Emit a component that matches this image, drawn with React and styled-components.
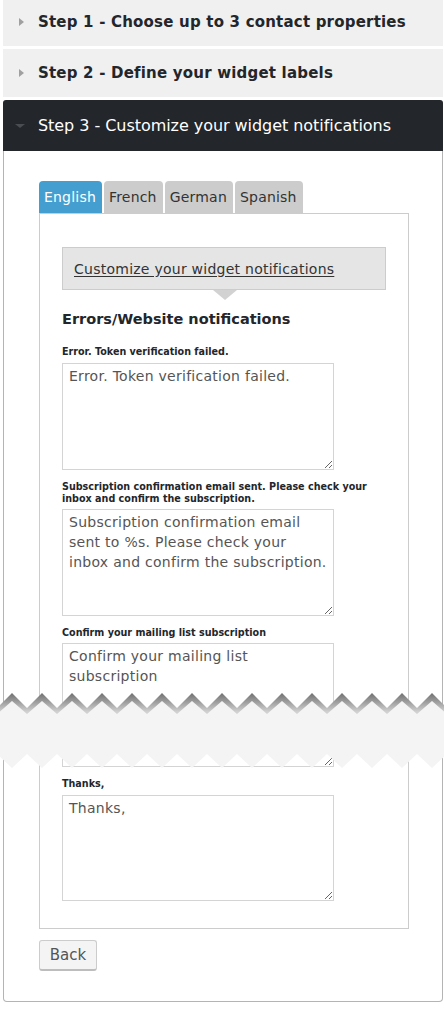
import React from "react";
import styled, { createGlobalStyle } from "styled-components";

const Global = createGlobalStyle`
  html, body { margin: 0; padding: 0; background: #fff; }
  body { font-family: "DejaVu Sans", Verdana, sans-serif; color: #333; }
  * { box-sizing: border-box; }
`;

const Page = styled.div`
  position: relative;
  width: 444px;
  padding: 0 1px 8px 3px;
  overflow: hidden;
`;

const StepHeader = styled.div`
  display: flex;
  align-items: center;
  height: ${(p) => (p.$active ? 51 : 48)}px;
  margin-top: ${(p) => (p.$first ? -2 : 3)}px;
  padding-left: 15px;
  background: ${(p) => (p.$active ? "#23262b" : "#f0f0f0")};
  color: ${(p) => (p.$active ? "#ffffff" : "#23262b")};
  font-size: ${(p) => (p.$active ? 16 : 15)}px;
  letter-spacing: ${(p) => (p.$active ? "-0.05px" : "0.2px")};
  font-weight: ${(p) => (p.$active ? "normal" : "bold")};
  border-radius: ${(p) => (p.$active ? "3px 3px 0 0" : "0")};
`;

const Caret = styled.span`
  display: inline-block;
  width: 0;
  height: 0;
  margin-right: ${(p) => (p.$open ? 13 : 14)}px;
  ${(p) =>
    p.$open
      ? `border-left: 5px solid transparent; border-right: 5px solid transparent; border-top: 4px solid #4a4d52; margin-left: -3px; margin-top: 1px;`
      : `border-top: 4.5px solid transparent; border-bottom: 4.5px solid transparent; border-left: 5px solid #a0a0a0; margin-left: 1px;`}
`;

const Panel = styled.div`
  border: 1px solid #b4b4b4;
  border-top: none;
  border-radius: 0 0 4px 4px;
  padding: 30px 33px 30px 35px;
`;

const TabBar = styled.div`
  display: flex;
  gap: 2px;
`;

const Tab = styled.div`
  height: 32px;
  padding: 0 6px 0 5px;
  display: flex;
  align-items: center;
  font-size: 14px;
  letter-spacing: 0.2px;
  border-radius: 4px 4px 0 0;
  background: ${(p) => (p.$active ? "#449fd0" : "#cccccc")};
  color: ${(p) => (p.$active ? "#ffffff" : "#333333")};
`;

const TabBody = styled.div`
  border: 1px solid #cccccc;
  padding: 33px 22px 27px 22px;
`;

const InfoBox = styled.div`
  position: relative;
  background: #e5e5e5;
  border: 1px solid #cccccc;
  height: 43px;
  padding: 0 11px;
  display: flex;
  align-items: center;
  font-size: 14px;
  letter-spacing: 0.25px;
  color: #333;
  &::after {
    content: "";
    position: absolute;
    left: 150px;
    bottom: -11px;
    border-left: 12px solid transparent;
    border-right: 12px solid transparent;
    border-top: 10px solid #d2d2d2;
  }
`;

const InfoLink = styled.span`
  text-decoration: underline;
  text-underline-offset: 2px;
`;

const SectionTitle = styled.h3`
  margin: 20px 0 0 0;
  font-size: 14.5px;
  font-weight: bold;
  color: #23262b;
  line-height: 18px;
`;

const Field = styled.div`
  display: flex;
  flex-direction: column;
  margin-top: ${(p) => p.$mt || 11}px;
`;

const Label = styled.label`
  font-size: 9.6px;
  font-weight: bold;
  line-height: 12px;
  color: #23262b;
  margin-bottom: ${(p) => p.$mb || 5}px;
`;

const Area = styled.textarea`
  width: 272px;
  height: ${(p) => p.$h || 107}px;
  border: 1px solid #d4d4d4;
  padding: 2px 6px;
  font-family: "DejaVu Sans", Verdana, sans-serif;
  font-size: 14px;
  letter-spacing: 0.27px;
  line-height: 20px;
  color: #555;
  background: #fff;
  margin: 0;
  outline: none;
`;

const BackButton = styled.button`
  margin-top: 11px;
  width: 58px;
  height: 31px;
  border: 1px solid #cccccc;
  border-bottom: 2px solid #bdbdbd;
  border-radius: 3px;
  background: #f4f4f4;
  font-family: "DejaVu Sans", Verdana, sans-serif;
  font-size: 15px;
  color: #555;
  padding: 0;
`;

const Tear = styled.svg`
  position: absolute;
  left: 0;
  top: 690px;
  display: block;
`;

function TearStrip() {
  const top = [];
  const lightTop = [];
  const bottom = [];
  for (let k = -1; k <= 15; k++) {
    top.push(`${12 + 30 * k},3`, `${27 + 30 * k},18`);
    lightTop.push(`${12 + 30 * k},11`, `${27 + 30 * k},24`);
  }
  for (let k = 15; k >= -1; k--) {
    bottom.push(`${27 + 30 * k},64`, `${12 + 30 * k},78`);
  }
  const gray = [...top, "470,40", "-30,40"].join(" ");
  const light = [...lightTop, ...bottom].join(" ");
  return (
    <Tear width="444" height="80" viewBox="0 0 444 80">
      <defs>
        <linearGradient id="tg" x1="0" y1="0" x2="0" y2="1" gradientUnits="objectBoundingBox">
          <stop offset="0" stopColor="#707070" />
          <stop offset="0.5" stopColor="#cfcfcf" />
          <stop offset="1" stopColor="#f0f0f0" />
        </linearGradient>
      </defs>
      <polygon points={gray} fill="url(#tg)" />
      <polygon points={light} fill="#f4f4f4" />
    </Tear>
  );
}

const fields = [
  { label: "Error. Token verification failed.", value: "Error. Token verification failed.", h: 107, mb: 5 },
  {
    label: "Subscription confirmation email sent. Please check your inbox and confirm the subscription.",
    value: "Subscription confirmation email sent to %s. Please check your inbox and confirm the subscription.",
    h: 107,
    mb: 4,
  },
  { label: "Confirm your mailing list subscription", value: "Confirm your mailing list subscription", h: 124, mb: 4 },
  { label: "Thanks,", value: "Thanks,", h: 106, mb: 5 },
];

export default function App() {
  return (
    <>
      <Global />
      <Page>
        <StepHeader $first>
          <Caret />
          Step 1 - Choose up to 3 contact properties
        </StepHeader>
        <StepHeader>
          <Caret />
          Step 2 - Define your widget labels
        </StepHeader>
        <StepHeader $active>
          <Caret $open />
          Step 3 - Customize your widget notifications
        </StepHeader>
        <Panel>
          <TabBar>
            <Tab $active>English</Tab>
            <Tab>French</Tab>
            <Tab>German</Tab>
            <Tab>Spanish</Tab>
          </TabBar>
          <TabBody>
            <InfoBox>
              <InfoLink>Customize your widget notifications</InfoLink>
            </InfoBox>
            <SectionTitle>Errors/Website notifications</SectionTitle>
            {fields.map((f, i) => (
              <Field key={i} $mt={i === 0 ? 18 : 11}>
                <Label $mb={f.mb}>{f.label}</Label>
                <Area $h={f.h} defaultValue={f.value} />
              </Field>
            ))}
          </TabBody>
          <BackButton>Back</BackButton>
        </Panel>
        <TearStrip />
      </Page>
    </>
  );
}
